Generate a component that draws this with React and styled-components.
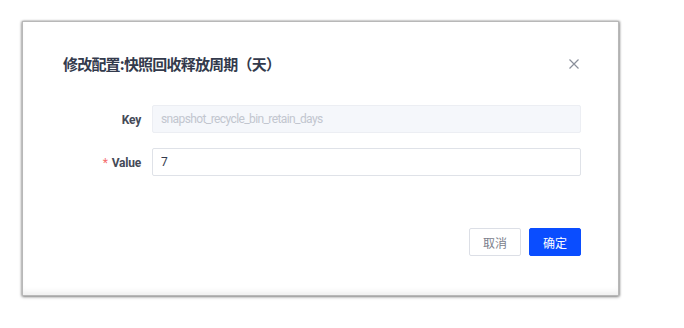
import React from "react";
import styled, { createGlobalStyle } from "styled-components";

const GlobalStyle = createGlobalStyle`
  html, body {
    margin: 0;
    padding: 0;
    background: #ffffff;
    font-family: Roboto, "Noto Sans CJK SC", sans-serif;
  }
`;

const Page = styled.div`
  width: 684px;
  height: 328px;
  padding: 21px 0 0 22px;
  box-sizing: border-box;
`;

const Dialog = styled.div`
  width: 597px;
  height: 275px;
  box-sizing: border-box;
  background: #ffffff;
  border: 1px solid #b8b8b8;
  box-shadow: 0 1px 3px rgba(0, 0, 0, 0.4), 1px 0 2px rgba(0, 0, 0, 0.25),
    -1px 0 2px rgba(0, 0, 0, 0.15), inset 0 -6px 6px -3px rgba(0, 0, 0, 0.07);
  display: flex;
  flex-direction: column;
`;

const Header = styled.div`
  display: flex;
  align-items: center;
  justify-content: space-between;
  padding: 32px 38px 0 40px;
  height: 20px;
`;

const Title = styled.h2`
  margin: 0;
  font-family: "Noto Sans CJK SC", sans-serif;
  font-size: 15px;
  line-height: 20px;
  font-weight: 700;
  color: #333a4c;
  letter-spacing: -0.8px;
`;

const CloseButton = styled.span`
  width: 12px;
  height: 12px;
  display: flex;
  color: #8a8f9a;
`;

const Form = styled.div`
  display: flex;
  flex-direction: column;
  gap: 15px;
  padding: 31px 37px 0 40px;
`;

const Row = styled.div`
  display: flex;
  align-items: center;
`;

const Label = styled.label`
  width: 78px;
  padding-right: 11px;
  padding-top: 1px;
  text-align: right;
  font-family: Roboto, sans-serif;
  font-size: 12px;
  font-weight: 700;
  color: #454a57;
  letter-spacing: -0.2px;
`;

const Required = styled.span`
  color: #f56c6c;
  margin-right: 4px;
  font-weight: 400;
`;

const Input = styled.input`
  flex: 1;
  height: 28px;
  box-sizing: border-box;
  padding: 0 8px;
  font-family: Roboto, sans-serif;
  font-size: 12px;
  letter-spacing: -0.6px;
  border: 1px solid ${({ disabled }) => (disabled ? "#eceef3" : "#dfe2e8")};
  border-radius: 2px;
  background: ${({ disabled }) => (disabled ? "#f5f7fb" : "#ffffff")};
  color: ${({ disabled }) => (disabled ? "#c2c6cf" : "#333a4c")};
  outline: none;
`;

const Footer = styled.div`
  display: flex;
  justify-content: flex-end;
  gap: 8px;
  padding: 52px 37px 0 0;
`;

const Button = styled.button`
  width: 52px;
  height: 28px;
  padding: 0;
  border-radius: 2px;
  font-family: "Noto Sans CJK SC", sans-serif;
  font-size: 12px;
  cursor: pointer;
  border: 1px solid ${({ $primary }) => ($primary ? "#0a4dff" : "#dcdfe6")};
  background: ${({ $primary }) => ($primary ? "#0a4dff" : "#ffffff")};
  color: ${({ $primary }) => ($primary ? "#ffffff" : "#7b808c")};
`;

const App = () => {
  return (
    <Page>
      <GlobalStyle />
      <Dialog>
        <Header>
          <Title>修改配置:快照回收释放周期（天）</Title>
          <CloseButton>
            <svg width="12" height="12" viewBox="0 0 12 12">
              <path
                d="M1.5 1.5 L10.5 10.5 M10.5 1.5 L1.5 10.5"
                stroke="currentColor"
                strokeWidth="1.2"
                fill="none"
              />
            </svg>
          </CloseButton>
        </Header>
        <Form>
          <Row>
            <Label>Key</Label>
            <Input disabled value="snapshot_recycle_bin_retain_days" readOnly />
          </Row>
          <Row>
            <Label>
              <Required>*</Required>Value
            </Label>
            <Input value="7" readOnly />
          </Row>
        </Form>
        <Footer>
          <Button>取消</Button>
          <Button $primary>确定</Button>
        </Footer>
      </Dialog>
    </Page>
  );
};

export default App;
